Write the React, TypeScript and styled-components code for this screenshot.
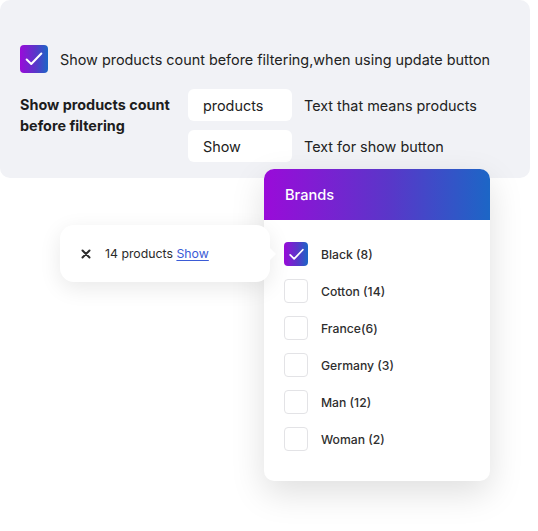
import React from "react";
import styled, { createGlobalStyle } from "styled-components";

const GlobalStyle = createGlobalStyle`
  html, body {
    margin: 0;
    padding: 0;
    background: #ffffff;
  }
  body {
    font-family: Inter, "Noto Sans", sans-serif;
    color: #222222;
  }
`;

const gradient = "linear-gradient(90deg, #9a0bd9 0%, #5a36c9 55%, #1c66c6 100%)";

const Page = styled.div`
  width: 538px;
  height: 531px;
  overflow: hidden;
`;

const SettingsPanel = styled.div`
  box-sizing: border-box;
  width: 530px;
  height: 178px;
  background: #f1f2f6;
  border-radius: 10px;
  padding: 45px 20px 0 20px;
`;

const CheckRow = styled.label`
  display: flex;
  align-items: center;
  gap: 12px;
  font-size: 14.4px;
  color: #222;
`;

const BigCheck = styled.span<{ $size: number }>`
  display: flex;
  align-items: center;
  justify-content: center;
  flex: none;
  width: ${(p) => p.$size}px;
  height: ${(p) => p.$size}px;
  border-radius: 4px;
  background: ${gradient};
`;

const EmptyCheck = styled.span`
  flex: none;
  box-sizing: border-box;
  width: 24px;
  height: 24px;
  border-radius: 4px;
  border: 1px solid #e3e3e6;
  background: #fff;
`;

const Grid = styled.div`
  display: grid;
  grid-template-columns: 156px 104px auto;
  column-gap: 12px;
  row-gap: 9px;
  margin-top: 16px;
  align-items: center;
`;

const FieldLabel = styled.div`
  grid-row: span 2;
  align-self: start;
  padding-top: 5px;
  font-size: 14.4px;
  font-weight: 700;
  line-height: 21px;
  color: #1d1d1d;
`;

const TextInput = styled.div`
  box-sizing: border-box;
  height: 32px;
  padding: 0 15px;
  display: flex;
  align-items: center;
  background: #fff;
  border-radius: 6px;
  font-size: 14.4px;
  color: #222;
`;

const Hint = styled.div`
  font-size: 14.4px;
  color: #222;
`;

const Stage = styled.div`
  display: flex;
  align-items: flex-start;
  margin-top: -9px;
  padding-left: 60px;
`;

const Popup = styled.div`
  position: relative;
  z-index: 2;
  box-sizing: border-box;
  width: 210px;
  height: 57px;
  margin-top: 56px;
  margin-right: -6px;
  padding-left: 20px;
  display: flex;
  align-items: center;
  gap: 13px;
  background: #fff;
  border-radius: 14px;
  box-shadow: 0 6px 22px rgba(0, 0, 0, 0.09);
  font-size: 12.3px;
  color: #2a2a2a;

  &::after {
    content: "";
    position: absolute;
    right: -6px;
    top: 22px;
    border-top: 7px solid transparent;
    border-bottom: 7px solid transparent;
    border-left: 7px solid #fff;
  }
`;

const CloseMark = styled.span`
  display: flex;
  width: 12px;
  justify-content: center;
`;

const ShowLink = styled.a`
  color: #3b5bd6;
  text-decoration: underline;
  text-underline-offset: 2px;
`;

const BrandsCard = styled.div`
  position: relative;
  z-index: 1;
  width: 226px;
  height: 312px;
  background: #fff;
  border-radius: 10px;
  overflow: hidden;
  box-shadow: 0 12px 34px rgba(0, 0, 0, 0.13);
`;

const CardHeader = styled.div`
  height: 51px;
  display: flex;
  align-items: center;
  padding-left: 21px;
  background: ${gradient};
  color: #fff;
  font-size: 14.6px;
  font-weight: 500;
`;

const BrandList = styled.ul`
  list-style: none;
  margin: 0;
  padding: 22px 0 0 20px;
  display: flex;
  flex-direction: column;
  gap: 13px;
`;

const BrandRow = styled.li`
  display: flex;
  align-items: center;
  gap: 13px;
  font-size: 12.2px;
  font-weight: 500;
  color: #2e2e2e;
`;

const Tick: React.FC<{ size: number }> = ({ size }) => (
  <svg width={size} height={size} viewBox="0 0 24 24" fill="none">
    <path d="M4 12.5l5 5L20 6" stroke="#fff" strokeWidth="2.2" strokeLinecap="round" strokeLinejoin="round" />
  </svg>
);

const brands = [
  { name: "Black (8)", checked: true },
  { name: "Cotton (14)", checked: false },
  { name: "France(6)", checked: false },
  { name: "Germany (3)", checked: false },
  { name: "Man (12)", checked: false },
  { name: "Woman (2)", checked: false },
];

const App: React.FC = () => {
  return (
    <Page>
      <GlobalStyle />
      <SettingsPanel>
        <CheckRow>
          <BigCheck $size={28}>
            <Tick size={22} />
          </BigCheck>
          Show products count before filtering,when using update button
        </CheckRow>
        <Grid>
          <FieldLabel>
            Show products count
            <br />
            before filtering
          </FieldLabel>
          <TextInput>products</TextInput>
          <Hint>Text that means products</Hint>
          <TextInput>Show</TextInput>
          <Hint>Text for show button</Hint>
        </Grid>
      </SettingsPanel>
      <Stage>
        <Popup>
          <CloseMark>
            <svg width="10" height="10" viewBox="0 0 10 10">
              <path d="M1.5 1.5l7 7M8.5 1.5l-7 7" stroke="#2a2a2a" strokeWidth="2" strokeLinecap="round" />
            </svg>
          </CloseMark>
          <span>
            14 products <ShowLink>Show</ShowLink>
          </span>
        </Popup>
        <BrandsCard>
          <CardHeader>Brands</CardHeader>
          <BrandList>
            {brands.map((b) => (
              <BrandRow key={b.name}>
                {b.checked ? (
                  <BigCheck $size={24}>
                    <Tick size={19} />
                  </BigCheck>
                ) : (
                  <EmptyCheck />
                )}
                {b.name}
              </BrandRow>
            ))}
          </BrandList>
        </BrandsCard>
      </Stage>
    </Page>
  );
};

export default App;
